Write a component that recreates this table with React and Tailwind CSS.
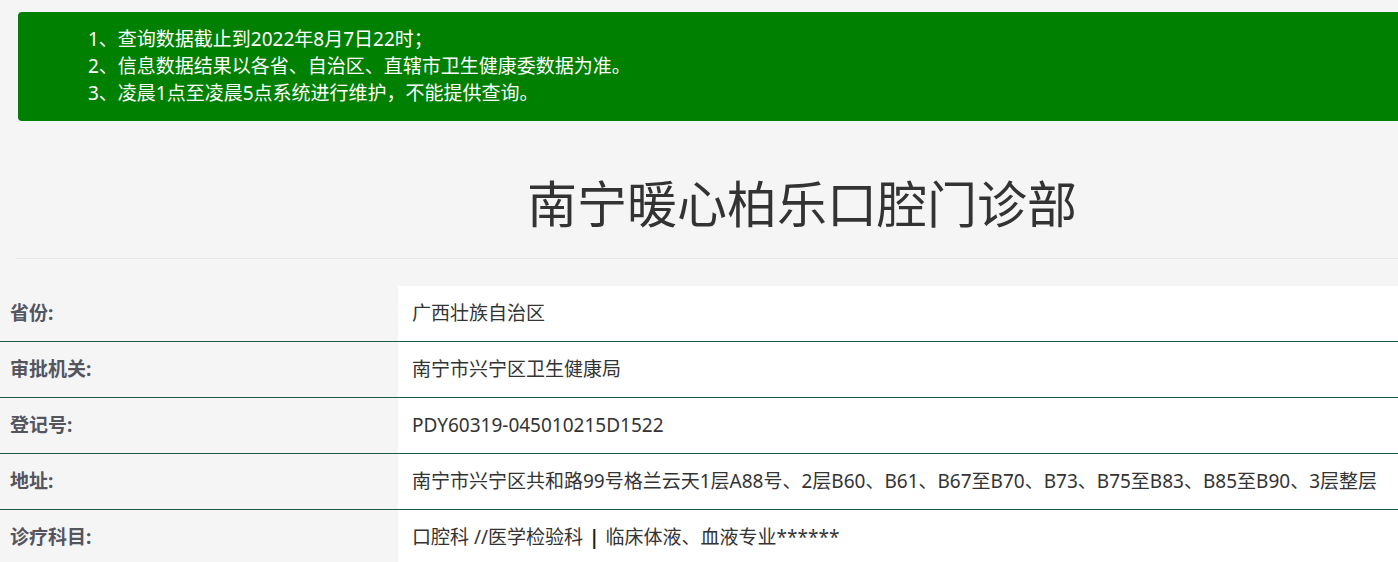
import React from 'react';

const rows = [
  { label: '省份:', value: '广西壮族自治区' },
  { label: '审批机关:', value: '南宁市兴宁区卫生健康局' },
  { label: '登记号:', value: 'PDY60319-045010215D1522' },
  { label: '地址:', value: '南宁市兴宁区共和路99号格兰云天1层A88号、2层B60、B61、B67至B70、B73、B75至B83、B85至B90、3层整层' },
  {
    label: '诊疗科目:',
    value: (
      <>
        口腔科 //医学检验科 <span className="font-bold text-[#222] mx-[6px]">|</span> 临床体液、血液专业******
      </>
    ),
  },
];

const App = () => {
  return (
    <div
      className="w-full h-[562px] overflow-hidden bg-[#f5f5f5]"
      style={{ fontFamily: '"Noto Sans", "Noto Sans CJK SC", sans-serif' }}
    >
      <div className="w-[1600px]">
        {/* Notice banner */}
        <div className="ml-[18px] mt-[12px] w-[1568px] h-[109px] rounded-[4px] bg-[#008000] pl-[70px] pt-[14px] text-white text-[19px] leading-[27px]">
          <p>1、查询数据截止到2022年8月7日22时；</p>
          <p>2、信息数据结果以各省、自治区、直辖市卫生健康委数据为准。</p>
          <p>3、凌晨1点至凌晨5点系统进行维护，不能提供查询。</p>
        </div>

        {/* Title */}
        <div className="ml-[18px] w-[1568px] text-center">
          <h1 className="mt-[55px] text-[50px] leading-[56px] text-[#333]">南宁暖心柏乐口腔门诊部</h1>
        </div>

        <div className="ml-[16px] mt-[26px] border-t border-[#e8e8e8]" />

        {/* Info table */}
        <div className="mt-[27px]">
          {rows.map((row, i) => (
            <div key={i} className="flex h-[56px] border-b border-[#1d5a40]">
              <div className="w-[398px] shrink-0 flex items-center pl-[10px] text-[19px] font-bold text-[#555560]">
                {row.label}
              </div>
              <div className="flex-1 bg-white flex items-center pl-[14px] text-[19px] text-[#333] whitespace-nowrap">
                {row.value}
              </div>
            </div>
          ))}
        </div>
      </div>
    </div>
  );
};

export default App;
